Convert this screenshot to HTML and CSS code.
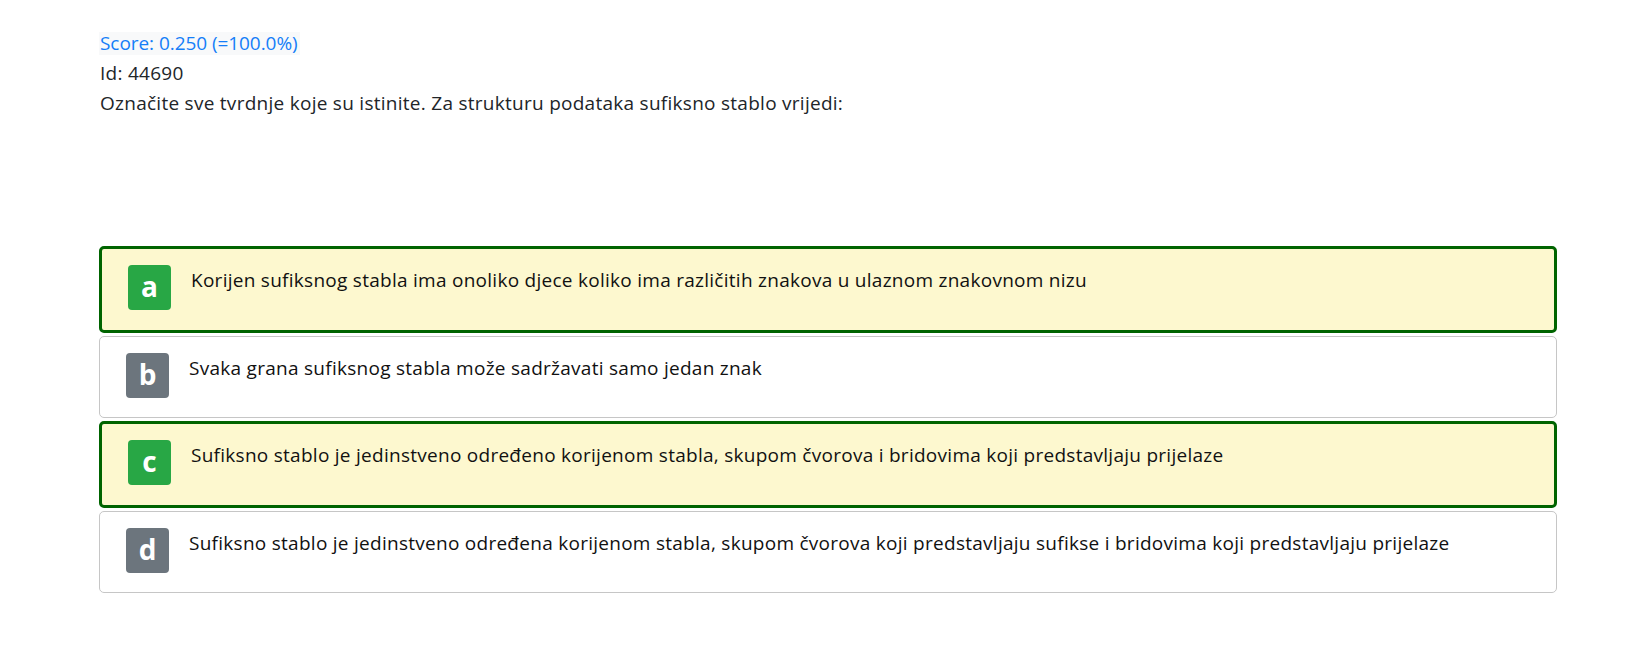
FILE: index.html
```html
<!DOCTYPE html>
<html lang="hr">
<head>
<meta charset="utf-8">
<title>Pitanje</title>
<link rel="stylesheet" href="styles.css">
</head>
<body>
<div class="page">
  <div class="meta">
    <div class="line"><span class="score">Score: 0.250 (=100.0%)</span></div>
    <div class="line">Id: 44690</div>
    <div class="line">Označite sve tvrdnje koje su istinite. Za strukturu podataka sufiksno stablo vrijedi:</div>
  </div>
  <div class="answers">
    <div class="answer correct">
      <div class="badge green">a</div>
      <div class="text">Korijen sufiksnog stabla ima onoliko djece koliko ima različitih znakova u ulaznom znakovnom nizu</div>
    </div>
    <div class="answer">
      <div class="badge grey">b</div>
      <div class="text">Svaka grana sufiksnog stabla može sadržavati samo jedan znak</div>
    </div>
    <div class="answer correct">
      <div class="badge green">c</div>
      <div class="text">Sufiksno stablo je jedinstveno određeno korijenom stabla, skupom čvorova i bridovima koji predstavljaju prijelaze</div>
    </div>
    <div class="answer">
      <div class="badge grey">d</div>
      <div class="text">Sufiksno stablo je jedinstveno određena korijenom stabla, skupom čvorova koji predstavljaju sufikse i bridovima koji predstavljaju prijelaze</div>
    </div>
  </div>
</div>
</body>
</html>
```

FILE: styles.css
```css
html, body {
  margin: 0;
  padding: 0;
  background: #ffffff;
}
body {
  font-family: "Open Sans", "Noto Sans", sans-serif;
  color: #212529;
}
.page {
  width: 1458px;
  padding: 32px 0 0 99px;
}
.meta {
  font-size: 19px;
  letter-spacing: 0.27px;
  height: 214px;
}
.line {
  height: 23px;
  line-height: 23px;
  margin-bottom: 7px;
  padding-left: 1px;
}
.score {
  display: inline-block;
  margin-left: -1px;
  padding: 0 2px 0 1px;
  background: #f8f9fa;
  color: #157ef8;
  letter-spacing: -0.06px;
}
.answers {
  display: flex;
  flex-direction: column;
  gap: 3px;
}
.answer {
  display: flex;
  align-items: flex-start;
  gap: 20px;
  border: 1px solid #c6c6c6;
  border-radius: 5px;
  padding: 16px 26px 19px 26px;
  background: #ffffff;
}
.answer.correct {
  border: 3px solid #006400;
  padding-bottom: 20px;
  background: #fdf8cf;
}
.badge {
  width: 43px;
  height: 45px;
  flex: none;
  border-radius: 4px;
  color: #ffffff;
  font-weight: 700;
  font-size: 28px;
  line-height: 42px;
  text-align: center;
}
.badge.green { background: #28a745; }
.badge.grey { background: #6c757d; }
.text {
  font-size: 19px;
  letter-spacing: 0.27px;
  line-height: 24px;
  color: #111111;
  padding-top: 3px;
}
```
